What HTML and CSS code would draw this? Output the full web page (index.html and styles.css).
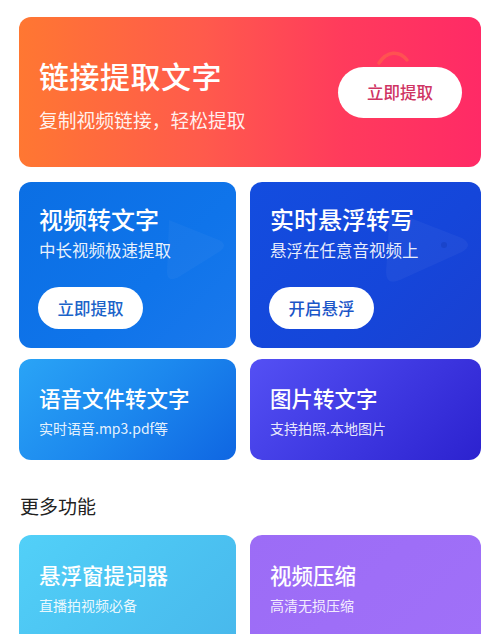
FILE: index.html
```html
<!DOCTYPE html>
<html lang="zh-CN">
<head>
<meta charset="utf-8">
<title>文字提取</title>
<link rel="stylesheet" href="styles.css">
</head>
<body>
<main class="page">
  <section class="hero">
    <svg class="hero-deco" width="60" height="40" viewBox="0 0 60 40"><path d="M12 24 C 20 12, 32 11, 40 21" fill="none" stroke="#ff8a3a" stroke-width="3.5" stroke-linecap="round" opacity="0.35"/></svg>
    <div class="hero-text">
      <h1 class="hero-title">链接提取文字</h1>
      <p class="hero-sub">复制视频链接，轻松提取</p>
    </div>
    <button class="hero-btn">立即提取</button>
  </section>

  <div class="grid">
    <div class="card card-tall card-blue">
      <svg class="deco deco-left" width="90" height="90" viewBox="0 0 90 90"><path d="M20 20 L70 40 Q80 45 70 52 L28 78 Q18 82 18 72 Z" fill="#ffffff" opacity="0.035"/></svg>
      <h2 class="card-title">视频转文字</h2>
      <p class="card-sub">中长视频极速提取</p>
      <button class="card-btn">立即提取</button>
    </div>
    <div class="card card-tall card-deep">
      <svg class="deco deco-right" width="110" height="90" viewBox="0 0 110 90"><path d="M20 10 L92 38 Q104 45 92 52 L30 80 Q16 86 16 72 Z" fill="#ffffff" opacity="0.04"/><circle cx="74" cy="45" r="3" fill="#0a2aa0" opacity="0.25"/></svg>
      <h2 class="card-title">实时悬浮转写</h2>
      <p class="card-sub">悬浮在任意音视频上</p>
      <button class="card-btn">开启悬浮</button>
    </div>
    <div class="card card-short card-sky">
      <h3 class="small-title">语音文件转文字</h3>
      <p class="small-sub">实时语音.mp3.pdf等</p>
    </div>
    <div class="card card-short card-indigo">
      <h3 class="small-title">图片转文字</h3>
      <p class="small-sub">支持拍照.本地图片</p>
    </div>
  </div>

  <h4 class="section-title">更多功能</h4>

  <div class="grid">
    <div class="card card-more card-cyan">
      <h3 class="small-title">悬浮窗提词器</h3>
      <p class="small-sub">直播拍视频必备</p>
    </div>
    <div class="card card-more card-purple">
      <h3 class="small-title">视频压缩</h3>
      <p class="small-sub">高清无损压缩</p>
    </div>
  </div>
</main>
</body>
</html>
```

FILE: styles.css
```css
* { box-sizing: border-box; }
html, body { margin: 0; padding: 0; background: #ffffff; }
body {
  font-family: "Noto Sans CJK SC", "Noto Sans", sans-serif;
  width: 500px;
  height: 634px;
  overflow: hidden;
}
h1, h2, h3, h4, p { margin: 0; }
button {
  font-family: inherit;
  border: 0;
  cursor: pointer;
}
.page {
  padding: 17px 19px 0 19px;
}
.hero {
  position: relative;
  height: 150px;
  border-radius: 12px;
  background: linear-gradient(90deg, #ff7732 0%, #ff5a4c 40%, #ff3b5c 70%, #ff2a66 100%);
  display: flex;
  align-items: center;
  justify-content: space-between;
  padding: 0 19px 0 20px;
  overflow: hidden;
}
.hero-deco {
  position: absolute;
  left: 348px;
  top: 22px;
}
.hero-text {
  display: flex;
  flex-direction: column;
  gap: 21px;
  margin-top: 6px;
}
.hero-title {
  color: #ffffff;
  font-size: 30px;
  font-weight: 500;
  line-height: 1;
  letter-spacing: 0.5px;
}
.hero-sub {
  color: rgba(255,255,255,0.92);
  font-size: 18.8px;
  line-height: 1;
}
.hero-btn {
  width: 124px;
  height: 51px;
  border-radius: 26px;
  background: #ffffff;
  color: #cf3463;
  font-size: 16.5px;
  font-weight: 500;
  position: relative;
  z-index: 1;
}
.grid {
  display: grid;
  grid-template-columns: 217px 231px;
  column-gap: 14px;
  row-gap: 11px;
}
.hero + .grid { margin-top: 15px; }
.card {
  position: relative;
  border-radius: 12px;
  overflow: hidden;
  padding-left: 20px;
  display: flex;
  flex-direction: column;
  align-items: flex-start;
}
.card-tall {
  height: 166px;
  padding-top: 25px;
}
.card-short {
  height: 101px;
  padding-top: 28px;
}
.card-more {
  height: 110px;
  padding-top: 29px;
}
.card-blue { background: linear-gradient(135deg, #0b6fe4 0%, #0f74ea 60%, #1a78ec 100%); }
.card-deep { background: linear-gradient(135deg, #134ddf 0%, #1546da 60%, #1a40d2 100%); }
.card-sky { background: linear-gradient(135deg, #2aa4f6 0%, #1c88ee 50%, #0f66e2 100%); }
.card-indigo { background: linear-gradient(135deg, #5450f4 0%, #3f39e2 50%, #2c22cf 100%); }
.card-cyan { background: linear-gradient(135deg, #52d0f8 0%, #4cc4f2 50%, #48b8ec 100%); }
.card-purple { background: linear-gradient(135deg, #9c6cf6 0%, #a070f8 100%); }
.deco { position: absolute; pointer-events: none; }
.deco-left { left: 130px; top: 18px; }
.deco-right { left: 120px; top: 18px; }
.card-title {
  color: #ffffff;
  font-size: 24px;
  font-weight: 500;
  line-height: 1;
  position: relative;
}
.card-sub {
  color: rgba(255,255,255,0.92);
  font-size: 16.5px;
  line-height: 1;
  margin-top: 11px;
  position: relative;
}
.card-btn {
  margin-top: 28px;
  margin-left: -1px;
  width: 105px;
  height: 42px;
  border-radius: 21px;
  background: #ffffff;
  color: #1b63c9;
  font-size: 16.5px;
  font-weight: 500;
  position: relative;
}
.card-deep .card-btn { color: #1a55c8; }
.small-title {
  color: #ffffff;
  font-size: 21.5px;
  font-weight: 500;
  line-height: 1;
}
.small-sub {
  color: rgba(255,255,255,0.9);
  font-size: 14px;
  line-height: 1;
  margin-top: 12px;
}
.section-title {
  margin: 36px 0 20px 1px;
  color: #222222;
  font-size: 19px;
  font-weight: 400;
  line-height: 1;
}
```
